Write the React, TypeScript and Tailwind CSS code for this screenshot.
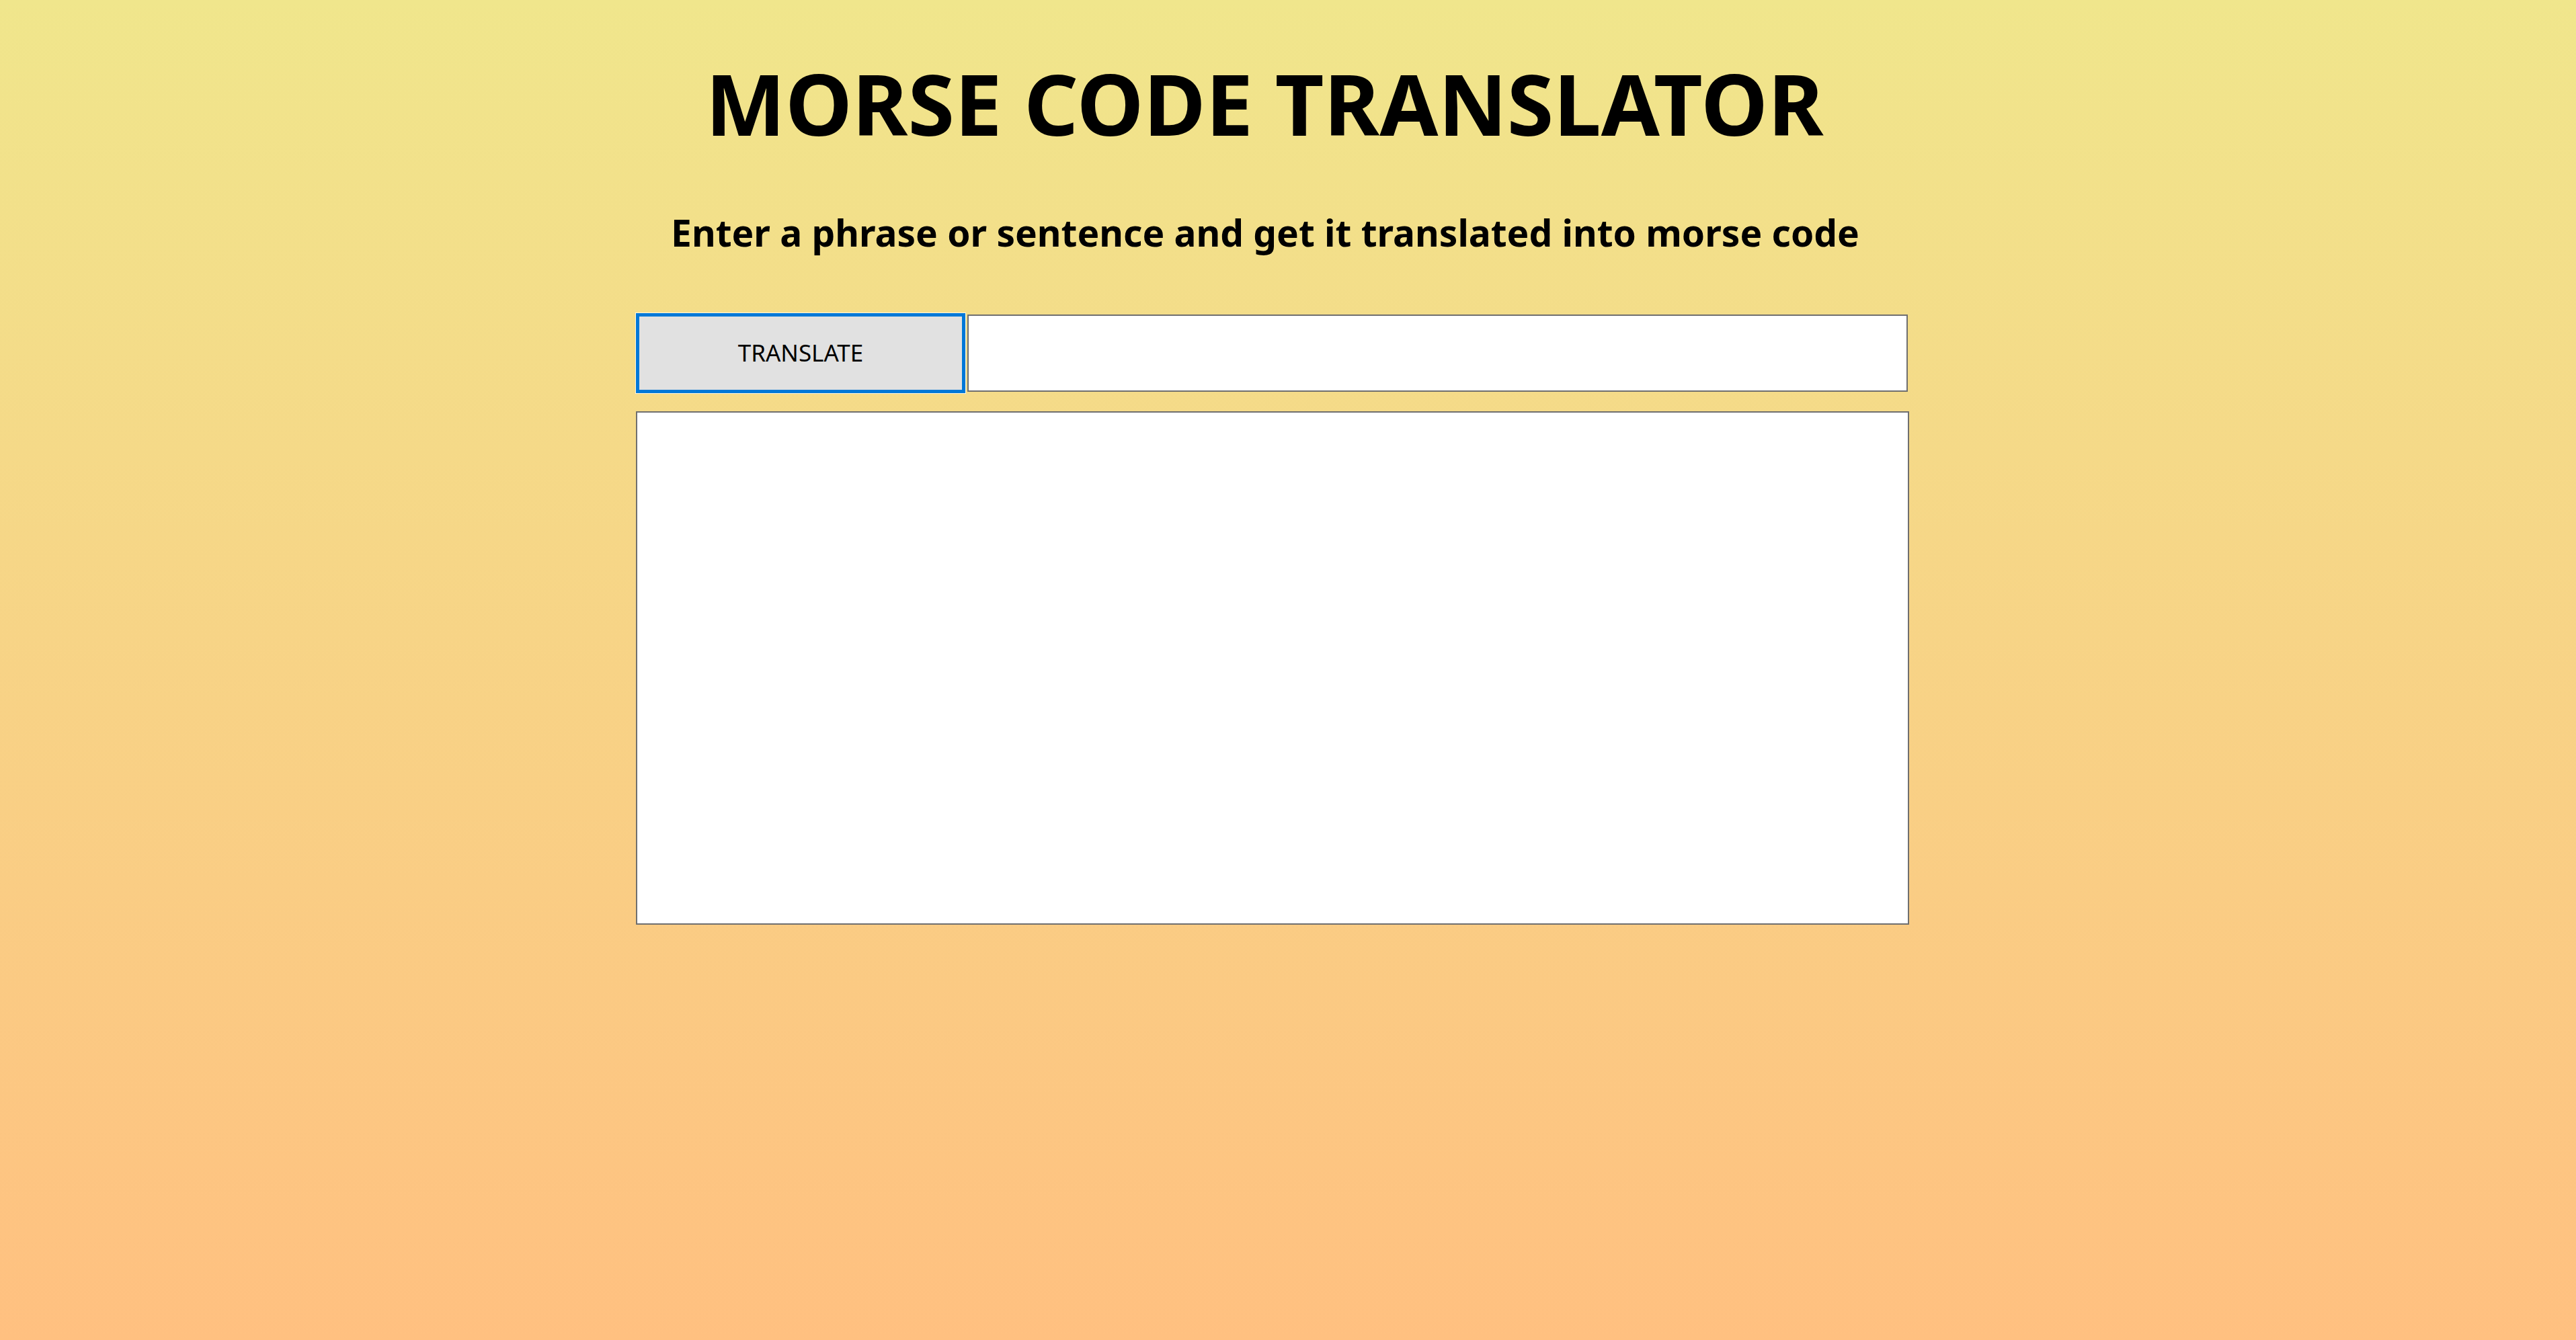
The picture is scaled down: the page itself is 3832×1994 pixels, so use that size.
export default function App() {
  return (
    <div className="min-h-[1994px] w-full bg-[linear-gradient(#f0e68c,#ffc080)] font-['Noto_Sans',sans-serif] text-black">
      <div className="flex flex-col items-center pr-[46px]">
        <h1 className="mt-[90px] mr-[24px] text-[126px] leading-none font-bold">MORSE CODE TRANSLATOR</h1>
        <h3 className="mt-[102px] mr-[22px] text-[55px] leading-none font-bold">
          Enter a phrase or sentence and get it translated into morse code
        </h3>

        <div className="mt-[93px] flex w-[1894px] flex-col">
          <div className="flex items-center gap-[3px]">
            <button className="h-[119px] w-[490px] shrink-0 border-[5px] border-[#0078d7] bg-[#e1e1e1] text-[35px] font-normal text-black shadow-[0_0_0_1px_rgba(255,255,255,0.75)]">
              TRANSLATE
            </button>
            <input
              type="text"
              className="h-[115px] w-[1399px] border-2 border-[#6f6f6f] bg-white px-3 text-[35px] outline-none"
            />
          </div>
          <textarea className="mt-[27px] h-[764px] w-full resize-none border-2 border-[#6f6f6f] bg-white p-3 text-[35px] outline-none" />
        </div>
      </div>
    </div>
  )
}
